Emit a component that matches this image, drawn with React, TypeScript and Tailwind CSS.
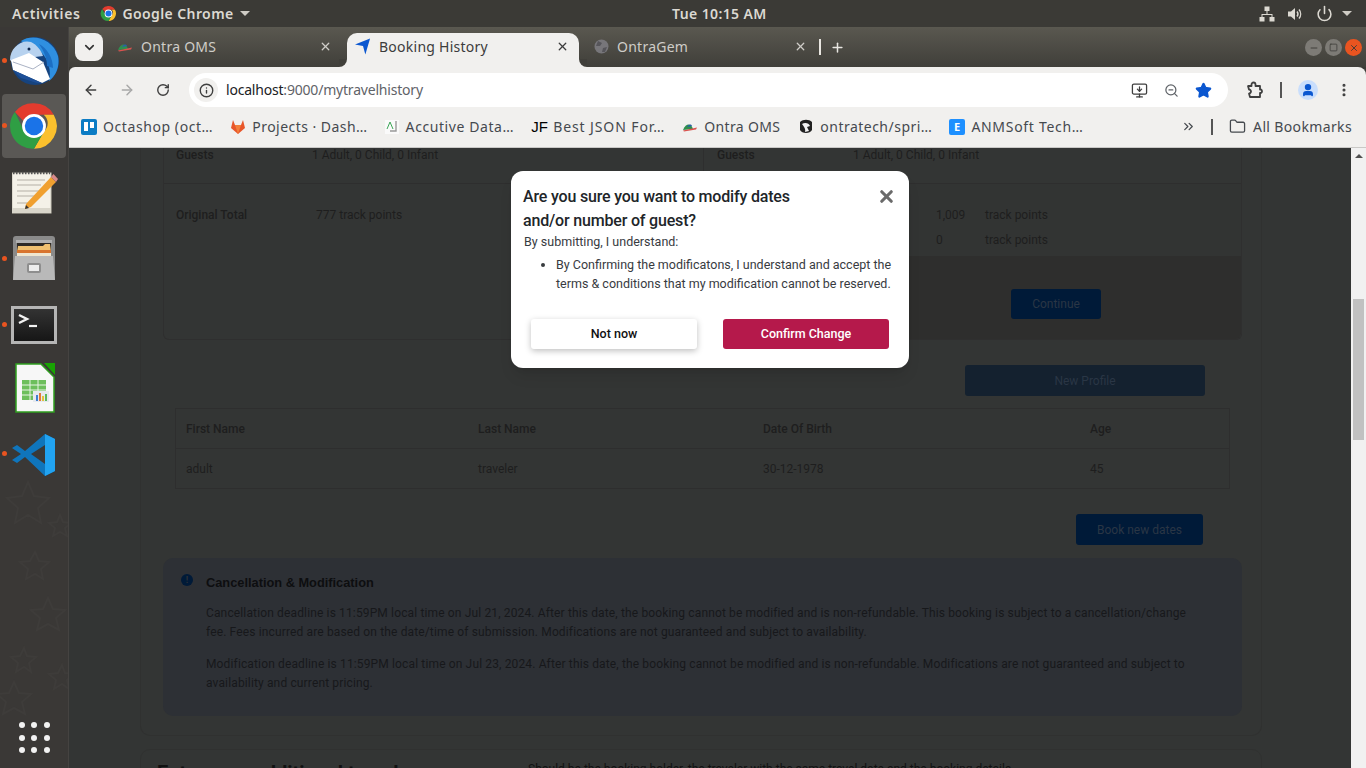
import { X, ArrowLeft, ArrowRight, RotateCw, Info, ZoomOut, Star, User, EllipsisVertical, ChevronDown, ChevronsRight, Folder, Plus, Minus, Square, Power, MonitorDown } from 'lucide-react';

const ui = "font-['Noto_Sans',sans-serif]";
const page = "font-['Roboto',sans-serif]";

function ChromeLogo({ size }: { size: number }) {
  return (
    <svg width={size} height={size} viewBox="0 0 48 48">
      <path d="M24 3a21 21 0 0 1 18.2 10.5H24a10.5 10.5 0 0 0-9.6 6.2L6.4 11A21 21 0 0 1 24 3z" fill="#e33b2e" />
      <path d="M42.2 13.5A21 21 0 0 1 24 45l9.1-15.7a10.5 10.5 0 0 0-.1-15.8z" fill="#fbc02d" />
      <path d="M24 45A21 21 0 0 1 6.4 11l8.9 18.5A10.5 10.5 0 0 0 33.1 29.3z" fill="#2f9e44" />
      <circle cx="24" cy="24" r="11" fill="#fff" />
      <circle cx="24" cy="24" r="8.5" fill="#1a73e8" />
    </svg>
  );
}

function OntraFavicon() {
  return (
    <svg width="16" height="16" viewBox="0 0 16 16">
      <path d="M1 11 C4 4 9 4 11 10z" fill="#2f8f4e" />
      <path d="M5 8 C7 5 9 5 10 7z" fill="#2b5fa8" />
      <path d="M1 11.5 L15 8.5 L14 10.5 L2 12.5z" fill="#d9534f" />
    </svg>
  );
}

function Thunderbird() {
  return (
    <svg width="50" height="50" viewBox="0 0 50 50">
      <circle cx="26" cy="25" r="24" fill="#16437e" />
      <path d="M12 5 C24 -3 44 3 49 20 C51 30 47 40 40 45 C43 32 38 18 26 12 C20 9 15 8 12 5z" fill="#2f8fe0" />
      <path d="M30 8 C38 12 44 22 44 32 L38 30 C38 22 35 15 30 8z" fill="#1c6fc4" />
      <path d="M1 24 C1 12 12 3 22 6 C28 9 32 14 34 20 L18 22 L3 26z" fill="#b7d2ef" />
      <circle cx="20" cy="13" r="1.5" fill="#10294f" />
      <path d="M2 24 L20 17 L34 26 L41 43 L33 47 L4 34z" fill="#ffffff" />
      <path d="M4 26 L24 33 L35 26" fill="none" stroke="#aab2c4" strokeWidth="1" />
      <path d="M4 34 L12 42 L28 47 L33 47z" fill="#1d4f97" />
    </svg>
  );
}

function Notepad() {
  return (
    <svg width="46" height="43" viewBox="0 0 46 43">
      <rect x="0" y="2" width="39" height="40" fill="#f4f1e8" stroke="#c9c5b8" />
      <rect x="0" y="37" width="39" height="5" fill="#d9d6cb" />
      <path d="M1 2h37" stroke="#555" strokeWidth="2.5" strokeDasharray="1.5 1.5" />
      <path d="M5 9h28M5 14h24M5 20h28M5 25h18M5 32h12" stroke="#b3b0a6" strokeWidth="1.2" />
      <path d="M14 33 L39 6 L44 11 L19 36 L13 38z" fill="#f0a030" />
      <path d="M39 6 L41.5 3 L46 8 L44 11z" fill="#d88a8a" />
      <path d="M14 34 L13 38 L17 37z" fill="#333" />
    </svg>
  );
}

function Cabinet() {
  return (
    <svg width="44" height="46" viewBox="0 0 44 46">
      <path d="M1 4 Q1 1 4 1 H40 Q43 1 43 4 V44 H1z" fill="#8a8a8a" />
      <path d="M4 5 H40 V8 H4z" fill="#b0b0b0" />
      <rect x="5" y="8" width="34" height="12" fill="#2e2a26" />
      <path d="M5 17 L6 11 H31 L33 9 H38 L39 17z" fill="#f0c070" />
      <rect x="5" y="15" width="34" height="3" fill="#d8742e" />
      <rect x="5" y="18" width="34" height="3" fill="#efe6d0" />
      <path d="M3 21 H41 L43 45 H1z" fill="#b9b9b9" />
      <rect x="15" y="28" width="14" height="10" rx="2" fill="#8e8e8e" />
      <rect x="17" y="30" width="10" height="6" fill="#ececec" />
    </svg>
  );
}

function TerminalIcon() {
  return (
    <svg width="46" height="38" viewBox="0 0 46 38">
      <defs>
        <linearGradient id="termbg" x1="0" y1="0" x2="0" y2="1">
          <stop offset="0" stopColor="#333" />
          <stop offset="1" stopColor="#161616" />
        </linearGradient>
      </defs>
      <rect x="0" y="0" width="46" height="38" fill="#b5b5b5" />
      <rect x="3" y="3" width="40" height="32" fill="url(#termbg)" />
      <path d="M8 9 L16 13 L8 17" fill="none" stroke="#f2f2f2" strokeWidth="2.4" />
      <path d="M18 20h8" stroke="#f2f2f2" strokeWidth="2.2" />
    </svg>
  );
}

function CalcIcon() {
  return (
    <svg width="40" height="50" viewBox="0 0 40 50">
      <path d="M29 0 H40 V12z" fill="#18a303" />
      <path d="M1 1 H26 L39 14 V49 H1z" fill="#f7f7f7" stroke="#2f9e1f" strokeWidth="1.5" />
      <rect x="7" y="17" width="24" height="20" fill="#6dbf5b" />
      <path d="M7 22h24M7 27h24M7 32h24M15 17v20M23 17v20" stroke="#e8f5e4" strokeWidth="1" />
      <rect x="18" y="28" width="16" height="11" fill="#e6e9ee" />
      <path d="M21 38v-6h2v6z" fill="#3f7fd0" />
      <path d="M24 38v-8h2v8z" fill="#e2783a" />
      <path d="M27 38v-5h2v5z" fill="#e3c23a" />
      <path d="M30 38v-7h2v7z" fill="#5cb85c" />
    </svg>
  );
}

function VSCode() {
  return (
    <svg width="44" height="44" viewBox="0 0 44 44">
      <path d="M33 1 L43 6 V38 L33 43 L13 24 L5 30 L0 27 L9 21 L0 15 L5 12 L13 18z" fill="#0f75bc" />
      <path d="M33 1 L43 6 V38 L33 43z" fill="#21a3f1" />
      <path d="M33 12 V31 L19 21z" fill="#3a3836" />
    </svg>
  );
}

function Dock() {
  const stars = [
    'M28 482l6 14 15 2-11 10 3 15-13-8-13 8 3-15-11-10 15-2z',
    'M60 515l3 7 8 1-6 5 2 8-7-4-7 4 2-8-6-5 8-1z',
    'M35 552l4 9 10 1-8 7 2 10-8-5-9 5 2-10-8-7 10-1z',
    'M48 598l5 11 12 1-9 8 3 12-11-6-11 6 3-12-9-8 12-1z',
    'M24 648l3 8 9 1-7 6 2 9-7-5-8 5 2-9-7-6 9-1z',
    'M14 682l5 11 12 1-9 8 3 12-11-6-11 6 3-12-9-8 12-1z',
    'M62 665l3 8 9 1-7 6 2 9-7-5-8 5 2-9-7-6 9-1z',
  ];
  const dot = 'absolute left-[2px] w-[5px] h-[5px] rounded-full bg-[#e95420]';
  return (
    <aside className="relative flex w-[69px] shrink-0 flex-col items-center overflow-hidden border-r border-[#454341] bg-[#3a3836]">
      {/* faint stars of the wallpaper */}
      <svg className="absolute left-0 top-[-27px]" width="69" height="768" fill="none" stroke="#3e3c3a" strokeWidth="2">
        {stars.map((d, i) => <path key={i} d={d} />)}
      </svg>
      <div className="relative flex h-[67px] w-full items-center justify-center"><span className={`${dot} top-[31px]`} /><Thunderbird /></div>
      <div className="relative flex h-[64px] w-[64px] items-center justify-center rounded-[4px] bg-[#5a5855]"><span className="absolute left-[0px] top-[29px] h-[5px] w-[5px] rounded-full bg-[#e95420]" /><ChromeLogo size={52} /></div>
      <div className="relative flex h-[67px] w-full items-center justify-center pl-[2px] pt-[2px]"><Notepad /></div>
      <div className="relative flex h-[66px] w-full items-center justify-center"><span className={`${dot} top-[31px]`} /><Cabinet /></div>
      <div className="relative flex h-[68px] w-full items-center justify-center"><span className={`${dot} top-[31px]`} /><TerminalIcon /></div>
      <div className="relative flex h-[58px] w-full items-center justify-center pl-[2px]"><CalcIcon /></div>
      <div className="relative flex h-[76px] w-full items-center justify-center"><span className={`${dot} top-[34px]`} /><VSCode /></div>
      <div className="mb-[15px] mt-auto grid grid-cols-3 gap-[6.5px]">
        {Array.from({ length: 9 }).map((_, i) => <span key={i} className="h-[6px] w-[6px] rounded-full bg-[#f2f2f2]" />)}
      </div>
    </aside>
  );
}

function TopBar() {
  return (
    <header className={`${ui} flex h-[27px] shrink-0 items-center bg-[#3b3a36] text-[14px] font-semibold text-[#dcd9d2]`}>
      <span className="ml-[12px] tracking-[0.6px]">Activities</span>
      <span className="ml-[20px]"><ChromeLogo size={17} /></span>
      <span className="ml-[5px] tracking-[0.4px]">Google Chrome</span>
      <span className="ml-[6px] h-0 w-0 border-x-[5px] border-t-[5px] border-x-transparent border-t-[#cfccc5]" />
      <span className="absolute left-[672px] tracking-[0.4px]">Tue 10:15 AM</span>
      <div className="ml-auto mr-[14px] flex items-center">
        <svg width="16" height="16" viewBox="0 0 16 16" fill="#dcd9d2">
          <rect x="5.5" y="0.5" width="5" height="4.5" />
          <rect x="0.5" y="11" width="5" height="4.5" />
          <rect x="10.5" y="11" width="5" height="4.5" />
          <path d="M7.5 5h1v3h5v3h-1V9H3.5v2h-1V8h5z" />
        </svg>
        <svg className="ml-[12px]" width="16" height="16" viewBox="0 0 16 16" fill="#dcd9d2">
          <path d="M1 5.5h3L8 2v12L4 10.5H1z" />
          <path d="M10 5.5a4 4 0 0 1 0 5M12 3.5a7 7 0 0 1 0 9" fill="none" stroke="#dcd9d2" strokeWidth="1.4" />
        </svg>
        <Power size={17} strokeWidth={2.2} className="ml-[13px]" />
        <span className="ml-[9px] h-0 w-0 border-x-[5px] border-t-[5px] border-x-transparent border-t-[#cfccc5]" />
      </div>
    </header>
  );
}

function Tab({ active, title, icon, box }: { active?: boolean; title: string; icon: React.ReactNode; box: string }) {
  return (
    <div className={`relative flex h-[34px] items-center pb-[7px] ${box} ${active ? 'rounded-t-[10px] bg-[#f1f0ee] text-[#3c3c3c]' : 'text-[#cfcdc8]'}`}>
      {active && (
        <>
          <span className="absolute bottom-0 left-[-8px] h-[8px] w-[8px] bg-[#f1f0ee]"><span className="block h-full w-full rounded-br-[8px] bg-[#403f3a]" /></span>
          <span className="absolute bottom-0 right-[-8px] h-[8px] w-[8px] bg-[#f1f0ee]"><span className="block h-full w-full rounded-bl-[8px] bg-[#403f3a]" /></span>
        </>
      )}
      <span className="flex w-[16px] shrink-0 justify-center">{icon}</span>
      <span className="ml-[8px] truncate text-[14px] tracking-[0.25px]">{title}</span>
      <X size={13} strokeWidth={2.4} className="ml-auto" />
    </div>
  );
}

function Tabs() {
  return (
    <div className="flex h-[40px] shrink-0 items-end bg-gradient-to-b from-[#5a5850] to-[#403f3a] pl-[6px]">
      <div className="mb-[6px] mr-[4px] flex h-[28px] w-[28px] items-center justify-center rounded-[8px] bg-[#f1f0ee] text-[#333]">
        <ChevronDown size={15} strokeWidth={2.6} />
      </div>
      <Tab title="Ontra OMS" box="w-[240px] pl-[10px] pr-[15px]" icon={<OntraFavicon />} />
      <Tab active title="Booking History" box="w-[232px] pl-[8px] pr-[10px]" icon={
        <svg width="17" height="17" viewBox="0 0 17 17"><path d="M0 6.5 L16 0 L11 17 L8.5 8z" fill="#0b57d0" /></svg>
      } />
      <Tab title="OntraGem" box="w-[240px] pl-[14px] pr-[12px]" icon={
        <svg width="15" height="15" viewBox="0 0 15 15"><circle cx="7.5" cy="7.5" r="7" fill="#77767a" /><path d="M4 2 L8 4 L6 7 L2 7z M9 9 L13 8 L11 13 L8 13z" fill="#56555a" /></svg>
      } />
      <span className="mb-[12px] h-[16px] w-[2px] bg-[#e8e6e1]" />
      <Plus size={15} strokeWidth={2.4} className="mb-[12px] ml-[9px] text-[#e8e6e1]" />
      <div className="mb-[11px] ml-auto mr-[4px] flex items-center gap-[3px]">
        <span className="flex h-[17px] w-[17px] items-center justify-center rounded-full bg-[#7d7b76] text-[#3b3a36]"><Minus size={10} strokeWidth={2.2} /></span>
        <span className="flex h-[17px] w-[17px] items-center justify-center rounded-full bg-[#7d7b76] text-[#3b3a36]"><Square size={9} strokeWidth={2} /></span>
        <span className="flex h-[17px] w-[17px] items-center justify-center rounded-full bg-[#e95420] text-[#3b3a36]"><X size={10} strokeWidth={2.2} /></span>
      </div>
    </div>
  );
}

function Toolbar() {
  return (
    <div className="flex h-[40px] shrink-0 items-center rounded-tl-[6px] rounded-tr-[8px] bg-[#f1f0ee] pt-[6px] text-[#3f3f3f]">
      <ArrowLeft size={16} strokeWidth={2.2} className="ml-[14px]" />
      <ArrowRight size={16} strokeWidth={2.2} className="ml-[20px] text-[#a8a8a8]" />
      <RotateCw size={14} strokeWidth={2.4} className="ml-[21px]" />
      <div className="ml-[19px] flex h-[34px] w-[1039px] items-center rounded-full bg-white pl-[5px] pr-[16px]">
        <span className="flex h-[24px] w-[24px] items-center justify-center rounded-full bg-[#f1f0ee]"><Info size={15} strokeWidth={2.2} /></span>
        <span className="ml-[8px] pb-[1px] text-[14px] tracking-[-0.2px] text-[#202124]">localhost<span className="text-[#5f6368]">:9000/mytravelhistory</span></span>
        <MonitorDown size={17} strokeWidth={1.8} className="ml-auto" />
        <ZoomOut size={15} strokeWidth={2} className="ml-[16px] text-[#5f6368]" />
        <Star size={17} className="ml-[16px] fill-[#0b57d0] text-[#0b57d0]" />
      </div>
      <svg className="ml-[17px]" width="18" height="18" viewBox="0 0 18 18" fill="none" stroke="#3f3f3f" strokeWidth="1.8" strokeLinejoin="round">
        <path d="M3 5h3.5V3.5a2 2 0 0 1 4 0V5H15v3.5h1a2 2 0 0 1 0 3.5h-1v4H5l-1-3.5a2 2 0 0 0 0-4z" />
      </svg>
      <span className="ml-[17px] h-[16px] w-[2px] bg-[#555]" />
      <span className="ml-[16px] flex h-[20px] w-[20px] items-center justify-center rounded-full bg-[#c9defc] text-[#0b57d0]"><User size={14} strokeWidth={3} className="fill-[#0b57d0]" /></span>
      <EllipsisVertical size={16} strokeWidth={2.6} className="ml-[18px]" />
    </div>
  );
}

function Mark({ className, children }: { className: string; children?: React.ReactNode }) {
  return <span className={`flex h-[16px] w-[16px] shrink-0 items-center justify-center ${className}`}>{children}</span>;
}

function Bookmark({ icon, label, box }: { icon: React.ReactNode; label: string; box: string }) {
  return (
    <span className={`flex items-center ${box}`}>
      {icon}
      <span className="ml-[6px] whitespace-nowrap text-[14px] text-[#45494e]">{label}</span>
    </span>
  );
}

function Bookmarks() {
  return (
    <div className="flex h-[41px] shrink-0 items-center border-b border-[#c9c8c6] bg-[#f1f0ee] pb-[1px] pl-[12px]">
      <Bookmark box="tracking-[0.58px]" label="Octashop (oct…" icon={
        <Mark className="rounded-[2px] bg-[#0c7cc4]"><span className="flex gap-[2px]"><span className="h-[9px] w-[4px] bg-white" /><span className="h-[6px] w-[4px] bg-white" /></span></Mark>} />
      <Bookmark box="ml-[17px] tracking-[0.46px]" label="Projects · Dash…" icon={
        <svg width="16" height="16" viewBox="0 0 16 16"><path d="M8 15 L1 9 L3 1 L5 6 H11 L13 1 L15 9z" fill="#e8562a" /><path d="M8 15 L5 6 H11z" fill="#f27f3a" /></svg>} />
      <Bookmark box="ml-[16px] tracking-[0.58px]" label="Accutive Data…" icon={
        <svg width="16" height="16" viewBox="0 0 16 16"><rect x="1" y="1" width="14" height="14" fill="#fafafa" /><path d="M3 10 L6 3 L9 10" fill="none" stroke="#3aa655" strokeWidth="1" /><path d="M12 2v10H6" fill="none" stroke="#999" strokeWidth="1.4" /></svg>} />
      <Bookmark box="ml-[17px] tracking-[0.9px]" label="Best JSON For…" icon={<span className="w-[16px] whitespace-nowrap font-['Liberation_Sans',sans-serif] text-[15px] leading-none tracking-normal text-black">JF</span>} />
      <Bookmark box="ml-[17px] tracking-[0.35px]" label="Ontra OMS" icon={<OntraFavicon />} />
      <Bookmark box="ml-[18px] tracking-[0.48px]" label="ontratech/spri…" icon={
        <svg width="16" height="16" viewBox="0 0 16 16"><path d="M2 3 C5 0 11 0 14 3 L14 11 C12 15 4 15 2 11z" fill="#222" /><path d="M4 5 C7 3 11 4 12 7 L9 8 L11 12 L7 13 C8 10 6 8 4 5z" fill="#f4f4f4" /></svg>} />
      <Bookmark box="ml-[17px] tracking-[0.7px]" label="ANMSoft Tech…" icon={
        <Mark className="rounded-[2px] bg-[#1e90ff] text-[11px] font-bold leading-none text-white">E</Mark>} />
      <ChevronsRight size={15} strokeWidth={2} className="ml-auto text-[#45494e]" />
      <span className="ml-[15px] h-[16px] w-[2px] bg-[#555]" />
      <Folder size={17} strokeWidth={1.8} className="ml-[16px] text-[#45494e]" />
      <span className="ml-[7px] mr-[14px] text-[14px] tracking-[0.36px] text-[#45494e]">All Bookmarks</span>
    </div>
  );
}

function Modal() {
  return (
    <div className={`${page} absolute left-[442px] top-[23px] h-[197px] w-[398px] rounded-[12px] bg-white px-[12px] pt-[14px] shadow-lg`}>
      <X size={19} strokeWidth={4} className="absolute right-[13px] top-[16px] text-[#6a6a6a]" />
      <h2 className="w-[300px] text-[16px] font-medium leading-[24px] tracking-[-0.18px] text-[#212529]">Are you sure you want to modify dates and/or number of guest?</h2>
      <p className="ml-[1px] text-[12.5px] leading-[18px] text-[#383b3f]">By submitting, I understand:</p>
      <ul className="mt-[4px] list-disc pl-[33px] text-[12.5px] leading-[19px] text-[#383b3f]">
        <li>By Confirming the modificatons, I understand and accept the terms &amp; conditions that my modification cannot be reserved.</li>
      </ul>
      <div className="mt-[26px] flex justify-between px-[8px]">
        <button className="h-[30px] w-[166px] rounded-[3px] bg-white text-[12.5px] font-medium text-[#111] shadow-[0_2px_6px_rgba(0,0,0,0.25)]">Not now</button>
        <button className="h-[30px] w-[166px] rounded-[3px] bg-[#b5194b] text-[12.5px] font-medium text-white">Confirm Change</button>
      </div>
    </div>
  );
}

function Comparison() {
  return (
    <section className="ml-[22px] mr-[19px] h-[192px] rounded-b-[6px] border border-t-0 border-[#2f2f2f] text-[12px] text-[#1e1e1e]">
      <div className="flex h-[36px] border-b border-[#2e2e2e] leading-[14px]">
        <div className="flex w-[540px] border-r border-[#2e2e2e] pl-[12px]">
          <span className="w-[136px] font-medium">Guests</span><span>1 Adult, 0 Child, 0 Infant</span>
        </div>
        <div className="flex flex-1 pl-[13px]">
          <span className="w-[136px] font-medium">Guests</span><span>1 Adult, 0 Child, 0 Infant</span>
        </div>
      </div>
      <div className="flex h-[155px]">
        <div className="flex w-[540px] pl-[12px] pt-[22px]">
          <span className="w-[140px] font-medium">Original Total</span><span>777 track points</span>
        </div>
        <div className="flex flex-1 flex-col">
          <div className="h-[72px] bg-[#323433] pl-[232px] pt-[24px] leading-[14px]">
            <div className="flex"><span className="w-[49px]">1,009</span><span>track points</span></div>
            <div className="mt-[11px] flex"><span className="w-[49px]">0</span><span>track points</span></div>
          </div>
          <div className="flex flex-1 justify-end rounded-br-[6px] bg-[#2e2e2d] pr-[140px] pt-[33px]">
            <button className="h-[30px] w-[90px] rounded-[3px] bg-[#001a38] text-[12px] text-[#2a3645]">Continue</button>
          </div>
        </div>
      </div>
    </section>
  );
}

function Travelers() {
  return (
    <section className="ml-[22px] mr-[19px] mt-[25px]">
      <div className="flex justify-end pr-[37px]">
        <button className="h-[31px] w-[240px] rounded-[3px] bg-[#14212f] text-[12px] text-[#2a3645]">New Profile</button>
      </div>
      <div className="ml-[12px] mr-[12px] mt-[12px] border border-[#2e2e2e] text-[12px] text-[#1e1e1e]">
        <div className="grid h-[40px] grid-cols-[292px_285px_327px_1fr] items-center border-b border-[#2e2e2e] pl-[10px] font-medium">
          <span>First Name</span><span>Last Name</span><span>Date Of Birth</span><span>Age</span>
        </div>
        <div className="grid h-[39px] grid-cols-[292px_285px_327px_1fr] items-center pl-[10px]">
          <span>adult</span><span>traveler</span><span>30-12-1978</span><span>45</span>
        </div>
      </div>
      <div className="mt-[25px] flex justify-end pr-[39px]">
        <button className="h-[31px] w-[127px] rounded-[3px] bg-[#001a38] text-[12px] text-[#2a3645]">Book new dates</button>
      </div>
    </section>
  );
}

function Policy() {
  return (
    <section className="ml-[22px] mr-[19px] mt-[13px] flex h-[158px] rounded-[10px] bg-[#2d3035] pl-[18px] pt-[16px] text-[12px] leading-[19px] text-[#17181b]">
      <span className="flex h-[12px] w-[12px] shrink-0 items-center justify-center rounded-full bg-[#001a38] text-[9px] font-bold leading-none text-[#2d3035]">!</span>
      <div className="ml-[13px] w-[985px] tracking-[0.14px]">
        <h3 className="font-['Liberation_Sans',sans-serif] text-[12.8px] font-bold leading-[18px] tracking-normal text-[#0d0e10]">Cancellation &amp; Modification</h3>
        <p className="mt-[12px]">Cancellation deadline is 11:59PM local time on Jul 21, 2024. After this date, the booking cannot be modified and is non-refundable. This booking is subject to a cancellation/change fee. Fees incurred are based on the date/time of submission. Modifications are not guaranteed and subject to availability.</p>
        <p className="mt-[13px]">Modification deadline is 11:59PM local time on Jul 23, 2024. After this date, the booking cannot be modified and is non-refundable. Modifications are not guaranteed and subject to availability and current pricing.</p>
      </div>
    </section>
  );
}

export default function App() {
  return (
    <div className="relative flex h-[768px] w-[1366px] flex-col overflow-hidden bg-[#3b3a36]">
      <TopBar />
      <div className="flex min-h-0 flex-1">
        <Dock />
        <main className={`${ui} flex min-w-0 flex-1 flex-col`}>
          <Tabs />
          <Toolbar />
          <Bookmarks />
          <div className="relative flex min-h-0 flex-1">
            <div className={`${page} flex-1 overflow-hidden bg-[#333534] pl-[71px] pr-[89px]`}>
              <div className="rounded-b-[10px] border-x border-b border-[#303130] pb-[19px]">
                <Comparison />
                <Travelers />
                <Policy />
              </div>
              <div className="mt-[13px] flex h-[60px] items-start rounded-t-[10px] border border-[#303130] pl-[16px] pt-[9px] text-[#111]">
                <span className="w-[371px] text-[20px] font-bold leading-[28px]">Enter your additional traveler</span>
                <span className="pt-[1px] text-[12px]">Should be the booking holder, the traveler with the same travel date and the booking details</span>
              </div>
            </div>
            <div className="flex w-[15px] shrink-0 flex-col bg-[#f1f1f1]">
              <span className="mx-auto mt-[6px] h-0 w-0 border-x-[4px] border-b-[4px] border-x-transparent border-b-[#505050]" />
              <span className="mx-auto mt-[141px] h-[141px] w-[11px] bg-[#c1c1c1]" />
            </div>
            <Modal />
          </div>
        </main>
      </div>
    </div>
  );
}
